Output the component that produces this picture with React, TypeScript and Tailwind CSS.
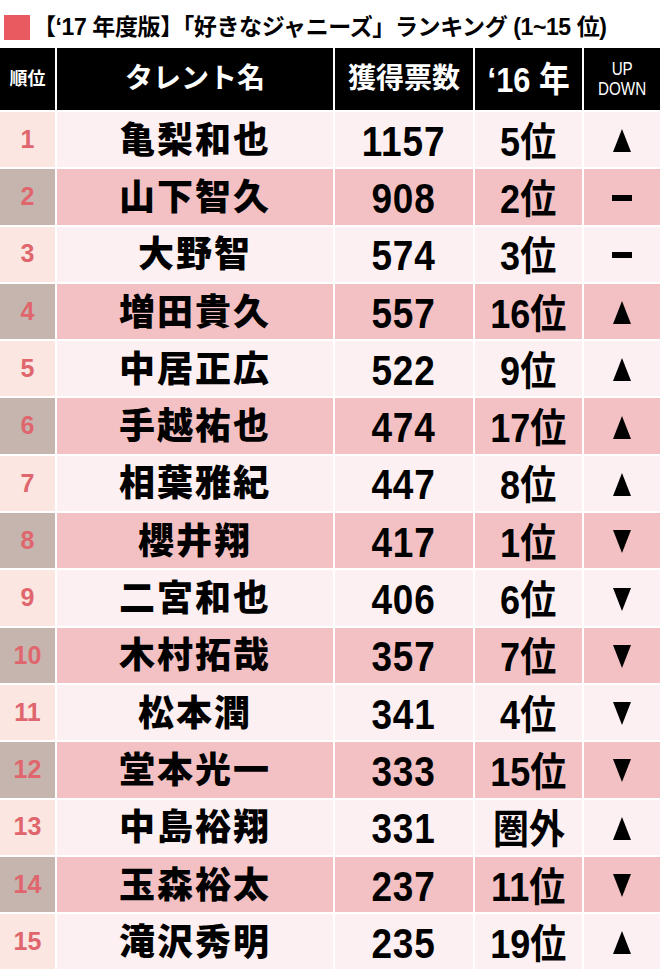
const rows: [string, string, string, string, "up" | "down" | "same"][] = [
  ["1", "亀梨和也", "1157", "5位", "up"],
  ["2", "山下智久", "908", "2位", "same"],
  ["3", "大野智", "574", "3位", "same"],
  ["4", "増田貴久", "557", "16位", "up"],
  ["5", "中居正広", "522", "9位", "up"],
  ["6", "手越祐也", "474", "17位", "up"],
  ["7", "相葉雅紀", "447", "8位", "up"],
  ["8", "櫻井翔", "417", "1位", "down"],
  ["9", "二宮和也", "406", "6位", "down"],
  ["10", "木村拓哉", "357", "7位", "down"],
  ["11", "松本潤", "341", "4位", "down"],
  ["12", "堂本光一", "333", "15位", "down"],
  ["13", "中島裕翔", "331", "圏外", "up"],
  ["14", "玉森裕太", "237", "11位", "down"],
  ["15", "滝沢秀明", "235", "19位", "up"],
];

const font = { fontFamily: "'Liberation Sans', 'Noto Sans CJK JP', sans-serif" };

function Mark({ dir }: { dir: "up" | "down" | "same" }) {
  if (dir === "same") return <div className="w-[20px] h-[6px] bg-black" />;
  return (
    <svg width="18" height="23" viewBox="0 0 18 23">
      {dir === "up" ? <polygon points="9,0 18,23 0,23" fill="#000" /> : <polygon points="0,0 18,0 9,23" fill="#000" />}
    </svg>
  );
}

export default function App() {
  return (
    <div className="w-[662px] h-[971px] bg-white overflow-hidden" style={font}>
      <div className="flex items-center h-[48px] pt-[7px] pl-[4px]">
        <div className="w-[26px] h-[25px] bg-[#e85a60]" />
        <div className="ml-[3px] text-[23px] font-bold text-black tracking-[-0.4px] leading-none whitespace-nowrap">
          【‘17 年度版】「好きなジャニーズ」ランキング (1~15 位)
        </div>
      </div>
      <div className="grid grid-cols-[55px_276px_138px_107px_76px] gap-[2px] w-[660px]">
        <div className="h-[62px] bg-black text-white flex items-center justify-center text-[18px] font-bold">順位</div>
        <div className="h-[62px] bg-black text-white flex items-center justify-center text-[28px] font-bold">タレント名</div>
        <div className="h-[62px] bg-black text-white flex items-center justify-center text-[28px] font-bold">獲得票数</div>
        <div className="h-[62px] bg-black text-white flex items-center justify-center">
          <span className="inline-block text-[35px] leading-none font-bold scale-x-[0.88] whitespace-nowrap">‘16 年</span>
        </div>
        <div className="h-[62px] bg-black text-white flex flex-col items-center justify-center text-[19px] leading-[20px]">
          <span className="inline-block scale-x-[0.8]">UP</span>
          <span className="inline-block scale-x-[0.8]">DOWN</span>
        </div>
        {rows.map(([rank, name, votes, prev, dir], i) => {
          const even = i % 2 === 1;
          const cell = `h-[55.3px] flex items-center justify-center ${even ? "bg-[#f3c1c3]" : "bg-[#fdf0f2]"}`;
          return [
            <div
              key={`r${i}`}
              className={`h-[55.3px] flex items-center justify-center text-[25px] font-bold text-[#e0666e] ${even ? "bg-[#c6b5af]" : "bg-[#fbe6e1]"}`}
            >
              {rank}
            </div>,
            <div key={`n${i}`} className={`${cell} text-[36px] font-black tracking-[2px] text-black pt-[2px]`}>{name}</div>,
            <div key={`v${i}`} className={`${cell} pt-[4px]`}>
              <span className="inline-block text-[42px] leading-none font-bold text-black tracking-[1px] scale-x-[0.88]">{votes}</span>
            </div>,
            <div key={`p${i}`} className={`${cell} pt-[4px]`}>
              <span className="inline-block text-[40px] leading-none font-bold text-black scale-x-[0.9] whitespace-nowrap">{prev}</span>
            </div>,
            <div key={`d${i}`} className={`${cell} pt-[2px]`}>
              <Mark dir={dir} />
            </div>,
          ];
        })}
      </div>
    </div>
  );
}
